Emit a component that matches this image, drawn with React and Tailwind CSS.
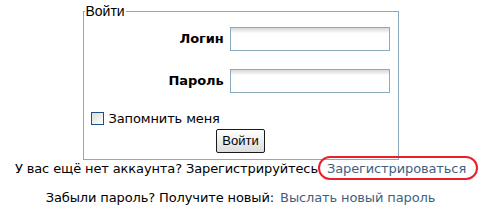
export default function App() {
  return (
    <div className="w-[481px] bg-white pt-[4px] text-[13px] tracking-[-0.12px] text-black font-['DejaVu_Sans',Verdana,sans-serif]">
      <fieldset className="mx-auto w-[316px] border border-[#8aaabf] pl-[7px] pr-[7px] pt-[8px] pb-[6px]">
        <legend className="-ml-[6px] px-[1px] text-[14px] leading-[15px] tracking-normal font-['Liberation_Sans',Arial,sans-serif]">
          Войти
        </legend>

        <div className="flex items-center justify-end gap-[6px] pr-[1px]">
          <label className="font-bold">Логин</label>
          <input
            type="text"
            autoFocus
            className="w-[160px] h-[24px] border border-[#8aaabf] bg-linear-to-b from-[#d8d8d8] to-white to-[25%] px-[5px] outline-none caret-black"
          />
        </div>

        <div className="mt-[18px] flex items-center justify-end gap-[6px] pr-[1px]">
          <label className="font-bold">Пароль</label>
          <input
            type="password"
            className="w-[160px] h-[24px] border border-[#8aaabf] bg-linear-to-b from-[#d8d8d8] to-white to-[25%] px-[5px] outline-none"
          />
        </div>

        <label className="mt-[18px] flex items-center gap-[5px] leading-[15px]">
          <input
            type="checkbox"
            className="appearance-none w-[13px] h-[13px] border border-[#1c5180] bg-linear-to-br from-[#dcdcd7] to-white"
          />
          <span>Запомнить меня</span>
        </label>

        <div className="mt-[3px] flex justify-center">
          <button className="h-[24px] w-[49px] rounded-[2px] border border-[#1a1a1a] bg-linear-to-b from-white to-[#dcdcdc] text-[13px] tracking-normal font-['Liberation_Sans',Arial,sans-serif]">
            Войти
          </button>
        </div>
      </fieldset>

      <p className="mt-0 text-center leading-[18px]">
        У вас ещё нет аккаунта? Зарегистрируйтесь{" "}
        <a href="#" className="relative ml-[5px] text-[#3f5f7f]">
          Зарегистрироваться
          <span className="absolute -left-[9px] -right-[12px] -top-[5px] -bottom-[4px] rounded-full border-2 border-[#e8202a]"></span>
        </a>
      </p>

      <p className="mt-[11px] text-center leading-[18px]">
        Забыли пароль? Получите новый:{" "}
        <a href="#" className="ml-[2px] text-[#3f5f7f]">
          Выслать новый пароль
        </a>
      </p>
    </div>
  );
}
